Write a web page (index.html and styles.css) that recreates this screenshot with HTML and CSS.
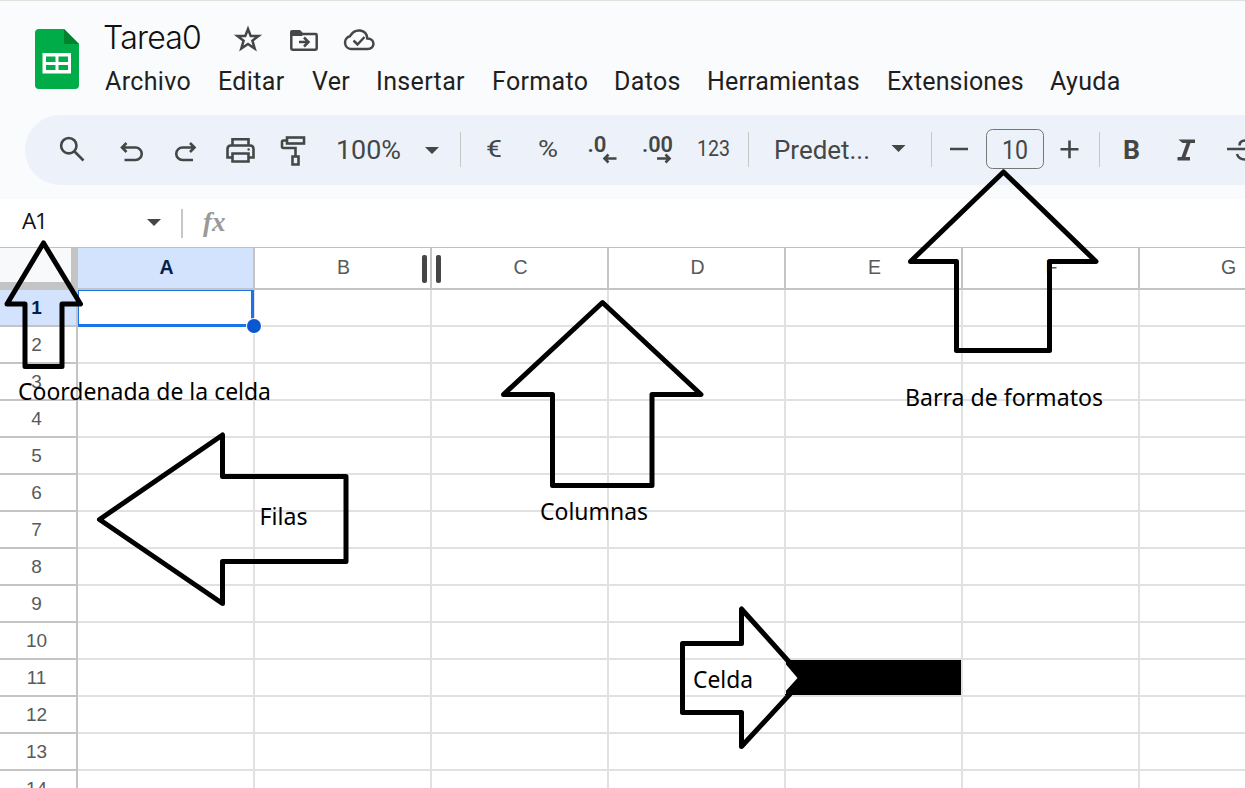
FILE: index.html
```html
<!DOCTYPE html>
<html lang="es">
<head>
<meta charset="utf-8">
<title>Tarea0</title>
<link rel="stylesheet" href="styles.css">
</head>
<body>
<div class="app">
  <header class="header">
    <svg class="logo" viewBox="0 0 44 60"><path fill="#00ac47" d="M4 0H29L44 15V56a4 4 0 0 1-4 4H4a4 4 0 0 1-4-4V4a4 4 0 0 1 4-4z"/><path fill="#00832d" d="M29 0L44 15H29z"/><path fill="#fff" fill-rule="evenodd" d="M7.500 24H36V44.500H7.500zM11 27.500V33H20.500V27.500zM23.500 27.500V33H33V27.500zM11 36V41H20.500V36zM23.500 36V41H33V36z"/></svg>
    <div class="heading">
      <div class="title-row">
        <h1 class="title">Tarea0</h1>
        <svg class="icon star" viewBox="0 0 26 26"><path d="M13 3L15.700 10H23.500L17.400 14.700L19.700 22.500L13 18L6.300 22.500L8.600 14.700L2.500 10H10.300Z"/></svg>
        <svg class="icon folder" viewBox="0 0 28 22"><path d="M1.300 3v15.500q0 1.200 1.200 1.200h23q1.200 0 1.200-1.200V5.200q0-1.200-1.200-1.200H13"/><path class="solid" d="M0 2q0-2 2-2h8l4 4-2 2H0z"/><path d="M9 12h9M14 7.500l4.500 4.500-4.500 4.500"/></svg>
        <svg class="icon cloud" viewBox="0 0 32 22"><path d="M24.500 20H8A6.500 6.500 0 0 1 7 7.200C12-1.500 23.500 0 24.300 9.500C32.500 9.500 32.500 20 24.500 20z"/><path d="M10.500 11.500l4 4 7-7.500"/></svg>
      </div>
      <nav class="menu"><span class="m1">Archivo</span><span class="m2">Editar</span><span class="m3">Ver</span><span class="m4">Insertar</span><span class="m5">Formato</span><span class="m6">Datos</span><span class="m7">Herramientas</span><span class="m8">Extensiones</span><span class="m9">Ayuda</span></nav>
    </div>
  </header>
  <div class="toolbar">
    <svg class="tools" viewBox="0 0 1220 70">
      <g class="ink">
        <circle cx="43.800" cy="30.700" r="7.700"/><path d="M49.500 36.500L58.500 45.500"/>
        <path d="M101.500 28L97 32.500L101.500 37M98 32.500H110.500a6.200 6.200 0 0 1 0 12.500H99.500"/>
        <path d="M165 28L169.500 32.500L165 37M168.500 32.500H157.500a6.200 6.200 0 0 0 0 12.500H168"/>
        <path d="M207.500 30V24.300H223.500V30M207.500 42.500H202.500V34q0-3.500 3.500-3.500H225q3.500 0 3.500 3.500V42.500H223.500M207.500 38.500H223.500V46.500H207.500z"/>
        <rect x="262" y="22.500" width="17" height="6"/><path d="M262 25.500H258.500q-1.500 0-1.500 1.500V31.500q0 1.500 1.500 1.500H270.500V41.500M267.500 41.500H273.500V49.500H267.500z"/>
        <path d="M591.500 43.500H580M583.500 39.500L579.500 43.500L583.500 47.500"/>
        <path d="M632 43.500H644M640.500 39.500L644.500 43.500L640.500 47.500"/>
        <path d="M925 34H943M1035.500 34.300H1053.500M1044.500 25.500V43.300"/>
        <path d="M1228 31.500q-1-6-7.500-6q-6 0-6 5M1202 34H1230M1212 39q1.500 5.500 8.500 5.500"/>
      </g>
      <path class="separator" d="M435.500 17V52M723.500 17V52M906.500 17V52M1074.500 17V52"/>
      <g class="glyph"><circle cx="223.600" cy="34.500" r="1.200"/><path d="M400 32H414L407 39zM866.500 30H880.500L873.500 37z"/>
        <path d="M1153.500 25H1170V28.500H1165.500L1160.500 42.500H1165V46H1152.500V42.500H1156.500L1161.500 28.500H1157.500z" transform="translate(0 -.5)"/></g>
      <rect class="size-box" x="961.500" y="14.500" width="57" height="39" rx="6"/>
      <g class="glyph">
        <text x="311" y="44" font-size="26" textLength="65" lengthAdjust="spacingAndGlyphs">100%</text>
        <text x="461" y="42" font-size="23" textLength="16" lengthAdjust="spacingAndGlyphs">€</text>
        <text x="513" y="42" font-size="23" textLength="20" lengthAdjust="spacingAndGlyphs">%</text>
        <text class="semibold" x="562.500" y="37" font-size="22" textLength="19" lengthAdjust="spacingAndGlyphs">.0</text>
        <text class="semibold" x="617" y="37" font-size="22" textLength="31" lengthAdjust="spacingAndGlyphs">.00</text>
        <text x="672" y="41" font-size="21.500" textLength="33" lengthAdjust="spacingAndGlyphs">123</text>
        <text x="749" y="43.500" font-size="25" textLength="96" lengthAdjust="spacingAndGlyphs">Predet...</text>
        <text x="977" y="43.500" font-size="25" textLength="26" lengthAdjust="spacingAndGlyphs">10</text>
        <text class="bold" x="1098" y="44" font-size="26" textLength="17" lengthAdjust="spacingAndGlyphs">B</text>
      </g>
    </svg>
  </div>
  <div class="formula-bar">
    <span class="cell-name">A1</span>
    <svg class="caret" viewBox="0 0 14 8"><path d="M0 0H14L7 7z"/></svg>
    <i class="divider"></i>
    <span class="fx">fx</span>
  </div>
  <div class="grid">
    <div class="corner"></div>
    <div class="col active">A</div><div class="col">B</div><div class="col">C</div><div class="col">D</div><div class="col">E</div><div class="col">F</div><div class="col">G</div>
    <div class="rows"><div class="row active">1</div><div class="row">2</div><div class="row">3</div><div class="row">4</div><div class="row">5</div><div class="row">6</div><div class="row">7</div><div class="row">8</div><div class="row">9</div><div class="row">10</div><div class="row">11</div><div class="row">12</div><div class="row">13</div><div class="row">14</div></div>
    <div class="cells"></div>
  </div>
</div>
<svg class="annotations" viewBox="0 0 1245 788">
  <path shape-rendering="crispEdges" fill="#1a73e8" d="M78 290H254V327H78zM79 291V324H251V291z" fill-rule="evenodd"/>
  <circle cx="254" cy="326" r="8" fill="#fff"/><circle cx="254" cy="326" r="7" fill="#0b57d0"/>
  <g fill="#444746"><rect x="422" y="255" width="5" height="28" rx="2"/><rect x="436" y="255" width="5" height="28" rx="2"/></g>
  <path d="M785 660H961V695H785z"/>
  <path fill="#fff" d="M783 661L797.500 678L783 694z"/>
  <path fill="#e1e1e1" d="M784 661H786V694H784z"/>
  <g class="arrows">
    <path d="M43.500 243L80.500 304H62V366.500H25V304H7z"/>
    <path d="M602.500 302.500L701 394.500H652V485.500H552.500V394.500H503.500z"/>
    <path d="M1003.500 172L1096 261.500H1049.500V350.500H956.500V261.500H910.500z"/>
    <path d="M99.500 519.500L222.500 435V476.500H346V561.500H222.500V603.500z"/>
    <path d="M790 663L741.500 609V643.500H682.500V712.500H741.500V746.500L790 694"/>
  </g>
  <g class="labels">
    <text x="18" y="400" textLength="253" lengthAdjust="spacingAndGlyphs">Coordenada de la celda</text>
    <text x="540" y="520" textLength="108" lengthAdjust="spacingAndGlyphs">Columnas</text>
    <text x="905" y="406" textLength="198" lengthAdjust="spacingAndGlyphs">Barra de formatos</text>
    <text x="259.500" y="525" textLength="48" lengthAdjust="spacingAndGlyphs">Filas</text>
    <text x="693" y="688" textLength="60" lengthAdjust="spacingAndGlyphs">Celda</text>
  </g>
</svg>
</body>
</html>
```
FILE: styles.css
```css
* { box-sizing: border-box; }
body { margin: 0; background: #fff; overflow: hidden; }
.app { width: 1245px; height: 788px; overflow: hidden; background: #f9fbfd; border-top: 1px solid #dfe1dc; font-family: Roboto, sans-serif; }
.header { display: flex; height: 114px; padding: 27px 0 0 35px; }
.logo { width: 44px; height: 60px; margin-top: .5px; }
.heading { margin-left: 26px; margin-top: -11px; }
.title-row { display: flex; align-items: center; height: 42px; }
.title { margin: 0 0 0 -2px; width: 130px; font: 300 32px/42px Inter, sans-serif; letter-spacing: -.8px; color: #111; }
.icon { fill: none; stroke: #444746; stroke-width: 2.5; overflow: visible; }
.icon .solid { fill: #444746; stroke: none; }
.star { width: 26px; height: 26px; margin-top: 2px; margin-left: 2px; }
.folder { width: 28px; height: 22px; margin-left: 29px; margin-top: 5px; }
.cloud { width: 32px; height: 22px; margin-left: 25px; margin-top: 4px; }
.menu { display: flex; gap: 27px; height: 42px; color: #1f1f1f; font: 400 25px/45px Roboto, sans-serif; white-space: nowrap; }
.menu span { letter-spacing: .35px; }
.menu .m7, .menu .m8 { letter-spacing: .15px; }
.m1 { width: 86px; } .m2 { width: 67px; } .m3 { width: 37px; } .m4 { width: 89px; }
.m5 { width: 95px; } .m6 { width: 66px; } .m7 { width: 153px; } .m8 { width: 136px; } .m9 { width: 71px; }
.toolbar { margin-left: 25px; height: 70px; border-radius: 35px 0 0 35px; background: #edf2fa; overflow: hidden; }
.tools { display: block; width: 1220px; height: 70px; font-family: Roboto, sans-serif; }
.ink { fill: none; stroke: #444746; stroke-width: 2.6; }
.glyph { fill: #444746; }
.semibold { font-weight: 600; }
.bold { font-weight: 700; }
.separator { stroke: #c7c7c7; stroke-width: 1; }
.size-box { fill: none; stroke: #747775; }
.formula-bar { display: flex; align-items: center; margin-top: 14px; height: 48px; padding-left: 22px; background: #fff; }
.cell-name { width: 125px; margin-top: -4px; font: 22.5px/44px "Open Sans", sans-serif; letter-spacing: -1.2px; color: #111; }
.caret { width: 14px; height: 8px; fill: #444746; }
.divider { width: 2px; height: 29px; margin: 0 0 0 20px; background: #c7c7c7; }
.fx { margin: -2px 0 0 20px; font: italic bold 27px/46px "Liberation Serif", serif; color: #999; }
.grid { display: grid; grid-template-columns: 78px repeat(7, 177px); grid-template-rows: 42px 520px; border-top: 1px solid #c0c0c0; background: #fff; }
.corner { background: #f8f9fa; border-right: 7px solid #c4c4c4; border-bottom: 8px solid #c4c4c4; }
.col { height: 42px; border-right: 2px solid #c4c4c4; border-bottom: 2px solid #c4c4c4; padding-left: 2px; text-align: center; color: #575a5a; font: 19.5px/38px "Liberation Sans", sans-serif; }
.col.active { background: #d3e3fd; color: #041e49; font-weight: 700; }
.rows { border-right: 2px solid #c4c4c4; }
.row { height: 37px; padding-right: 3px; border-bottom: 2px solid #c4c4c4; text-align: center; color: #575a5a; font: 19px/36px "Liberation Sans", sans-serif; }
.row.active { background: #d3e3fd; color: #041e49; font-weight: 700; }
.cells { grid-column: 2 / -1; background: repeating-linear-gradient(to right, transparent 0 175px, #e1e1e1 175px 177px), repeating-linear-gradient(to bottom, transparent 0 35px, #e1e1e1 35px 37px); }
.annotations { position: absolute; left: 0; top: 0; width: 1245px; height: 788px; }
.arrows { fill: none; stroke: #000; stroke-width: 5; stroke-linejoin: round; stroke-linecap: round; }
.labels { font: 23.5px "Noto Sans", sans-serif; fill: #000; }
```
